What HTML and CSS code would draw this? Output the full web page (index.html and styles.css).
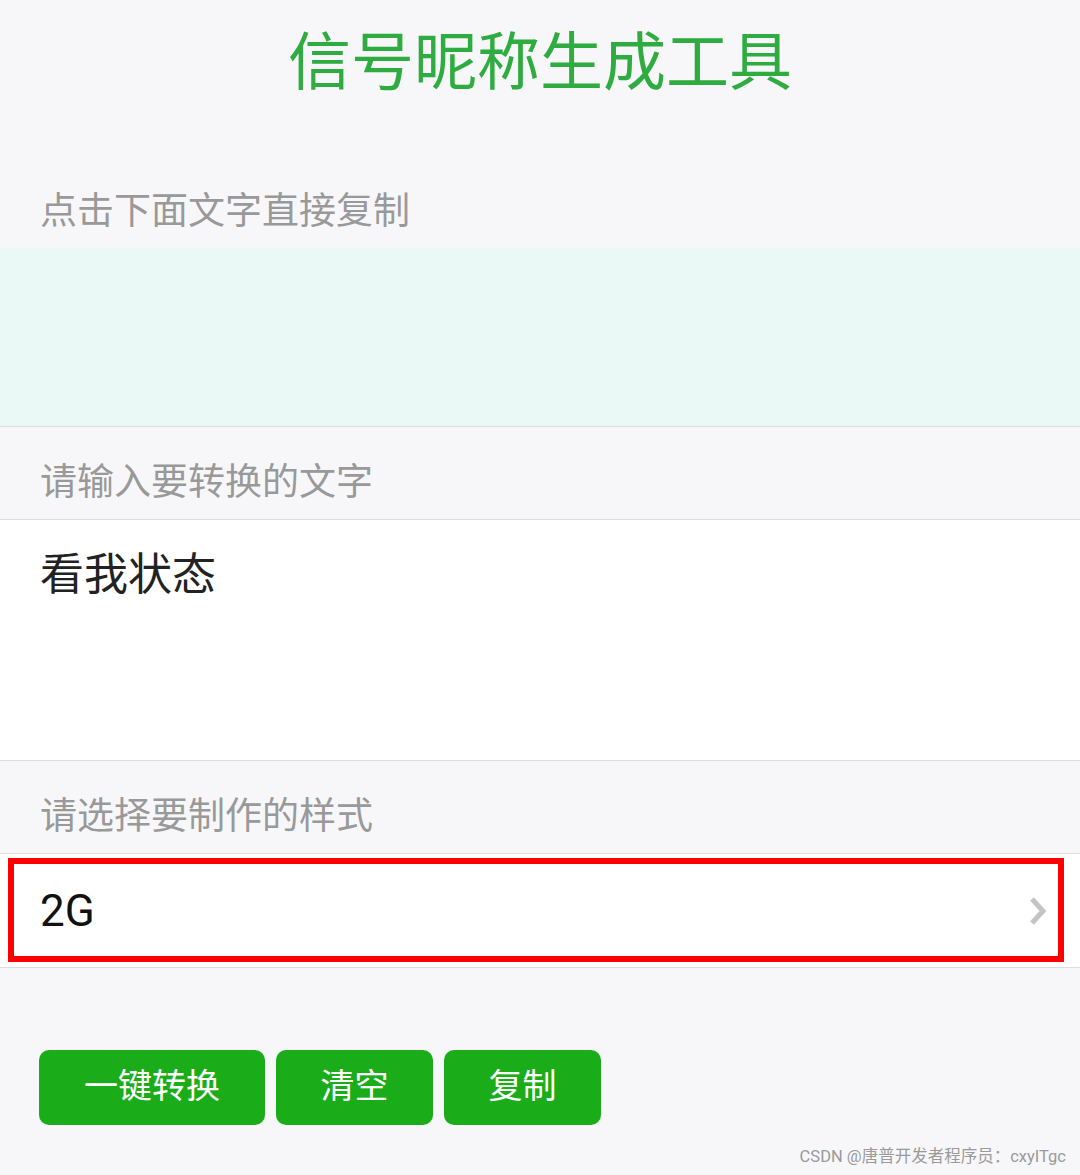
FILE: index.html
```html
<!DOCTYPE html>
<html lang="zh-CN">
<head>
    <meta charset="UTF-8">
    <meta name="viewport" content="width=device-width, initial-scale=1.0">
    <title>信号昵称生成工具</title>
    <link rel="stylesheet" href="styles.css">
</head>
<body>
    <div class="page">
        <h1 class="title">信号昵称生成工具</h1>

        <div class="label">点击下面文字直接复制</div>
        <div class="result" id="result"></div>

        <div class="label">请输入要转换的文字</div>
        <div class="input-box">
            <div class="input-text" id="source">看我状态</div>
        </div>

        <div class="label">请选择要制作的样式</div>
        <div class="picker">
            <span class="picker-value">2G</span>
            <svg class="chevron" width="20" height="32" viewBox="0 0 20 32">
                <polyline points="4,4 15,16 4,28" fill="none" stroke="#c4c4c8" stroke-width="5"/>
            </svg>
            <div class="mark"></div>
        </div>

        <div class="actions">
            <button class="btn btn-wide">一键转换</button>
            <button class="btn">清空</button>
            <button class="btn">复制</button>
        </div>

        <div class="watermark">CSDN @唐普开发者程序员：cxyITgc</div>
    </div>
</body>
</html>
```

FILE: styles.css
```css
body {
    margin: 0;
    background-color: #f7f7f9;
    font-family: Roboto, "Noto Sans CJK SC", sans-serif;
}
.page {
    position: relative;
    height: 1175px;
    overflow: hidden;
}
.title {
    margin: 0;
    padding-top: 18px;
    height: 138px;
    font-size: 63px;
    line-height: 90px;
    font-weight: normal;
    text-align: center;
    color: #2eac40;
}
.label {
    box-sizing: border-box;
    height: 92px;
    padding: 38px 40px 0;
    font-size: 37px;
    line-height: 36px;
    color: #999;
}
.result {
    height: 178px;
    background-color: #ebf9f6;
    border-bottom: 1px solid #ddd;
}
.input-box {
    height: 240px;
    background-color: #fff;
    border-top: 1px solid #ddd;
    border-bottom: 1px solid #ddd;
}
.input-text {
    padding: 25px 40px 0;
    font-size: 44px;
    line-height: 60px;
    color: #222;
}
.picker {
    position: relative;
    display: flex;
    align-items: center;
    justify-content: space-between;
    height: 113px;
    padding: 0 32px 0 40px;
    background-color: #fff;
    border-top: 1px solid #ddd;
    border-bottom: 1px solid #ddd;
}
.picker-value {
    font-size: 44px;
    color: #111;
}
.mark {
    position: absolute;
    left: 8px;
    right: 16px;
    top: 4px;
    bottom: 5px;
    border: 6px solid #f00;
}
.actions {
    display: flex;
    gap: 11px;
    padding: 82px 39px 0;
}
.btn {
    width: 157px;
    height: 75px;
    border: none;
    border-radius: 10px;
    background-color: #1aad19;
    color: #fff;
    font-family: inherit;
    font-size: 34px;
    padding: 0 0 9px;
}
.btn-wide {
    width: 226px;
}
.watermark {
    position: absolute;
    right: 14px;
    bottom: 8px;
    font-size: 16.5px;
    color: #9a9a9a;
}
```
